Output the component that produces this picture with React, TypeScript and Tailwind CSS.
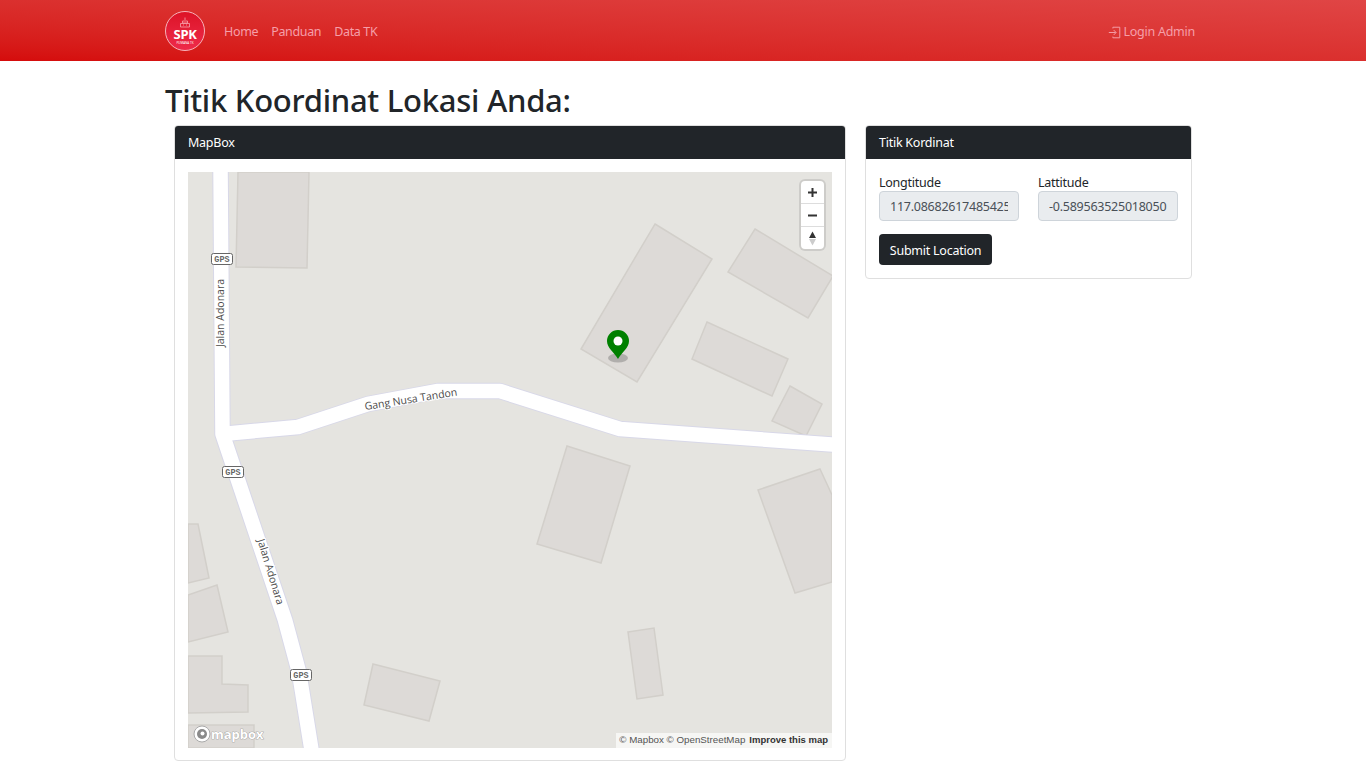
const font = "[font-family:'Noto_Sans','Open_Sans',sans-serif]";

const buildings = [
  '50,0 121,0 119,96 48,95',
  '467,52 524,87 449,210 393,177',
  '567,57 645,104 620,146 540,100',
  '519,150 600,187 584,224 504,187',
  '602,214 634,232 618,264 584,249',
  '379,274 442,294 413,391 349,372',
  '632,297 644,323 644,410 607,421 570,318',
  '440,460 466,456 475,523 449,527',
  '185,492 252,509 241,549 176,533',
  '0,352 10,352 21,406 0,411',
  '0,423 29,413 40,460 0,470',
  '0,484 34,484 34,512 60,513 60,540 0,541',
  '0,553 66,553 66,576 0,576',
];

const roads = [
  '32.5,-5 34.5,262 97,448 111,500 124,581',
  '34.5,262 110,255 180,232 250,219 312,219 432,257 650,273',
];

function Shield({ x, y }: { x: number; y: number }) {
  return (
    <g transform={`translate(${x} ${y})`}>
      <rect x="-10.5" y="-5.5" width="21" height="11" rx="2" fill="#fff" stroke="#666" strokeWidth="1" />
      <text x="0" y="3" textAnchor="middle" fontSize="8.5" fontWeight="700" fontFamily="'Liberation Mono',monospace" fill="#666">
        GPS
      </text>
    </g>
  );
}

function RoadLabel({ x, y, angle, children }: { x: number; y: number; angle: number; children: string }) {
  return (
    <text
      transform={`translate(${x} ${y}) rotate(${angle})`}
      textAnchor="middle"
      dominantBaseline="middle"
      fontSize="10.5"
      fontFamily="'Open Sans',sans-serif"
      fill="#4a4a4a"
      stroke="#fff"
      strokeWidth="2"
      paintOrder="stroke"
    >
      {children}
    </text>
  );
}

function MapPanel() {
  return (
    <div className="relative h-[576px] overflow-hidden bg-[#e5e4e0]">
      <svg viewBox="0 0 644 576" className="block h-[576px] w-[644px]">
        {buildings.map((points) => (
          <polygon key={points} points={points} fill="#dddad7" stroke="#d2cfca" strokeWidth="1.5" />
        ))}
        {roads.map((points) => (
          <polyline key={points} points={points} fill="none" stroke="#d8d8e8" strokeWidth="16.5" strokeLinejoin="round" />
        ))}
        {roads.map((points) => (
          <polyline key={points} points={points + ' '} fill="none" stroke="#fff" strokeWidth="14.5" strokeLinejoin="round" />
        ))}
        <RoadLabel x={223} y={228} angle={-9}>Gang Nusa Tandon</RoadLabel>
        <RoadLabel x={33} y={141} angle={-90}>Jalan Adonara</RoadLabel>
        <RoadLabel x={82} y={400} angle={73}>Jalan Adonara</RoadLabel>
        <Shield x={34} y={87} />
        <Shield x={45} y={300} />
        <Shield x={113} y={503} />
        {/* marker */}
        <ellipse cx="430" cy="186" rx="10" ry="4.5" fill="#000" opacity="0.2" />
        <path d="M430 187 C426 180 419 176 419 169 A11 11 0 0 1 441 169 C441 176 434 180 430 187 Z" fill="#008000" />
        <circle cx="430" cy="169" r="4.5" fill="#fff" />
      </svg>

      {/* zoom controls */}
      <div className="absolute right-2 top-[9px] flex w-[23px] flex-col rounded bg-white shadow-[0_0_0_2px_rgba(0,0,0,0.1)]">
        <div className="flex h-[23px] items-center justify-center border-b border-[#ddd]">
          <svg width="11" height="11" viewBox="0 0 11 11"><path d="M5.5 1v9M1 5.5h9" stroke="#333" strokeWidth="2" /></svg>
        </div>
        <div className="flex h-[23px] items-center justify-center border-b border-[#ddd]">
          <svg width="11" height="11" viewBox="0 0 11 11"><path d="M1 5.5h9" stroke="#333" strokeWidth="2" /></svg>
        </div>
        <div className="flex h-[22px] items-center justify-center">
          <svg width="9" height="15" viewBox="0 0 9 15">
            <path d="M4.5 0.5 8 7H1Z" fill="#333" />
            <path d="M4.5 14.5 8 8H1Z" fill="#ccc" />
          </svg>
        </div>
      </div>

      {/* mapbox logo */}
      <div className="absolute bottom-[5px] left-[5px] flex items-center">
        <svg width="18" height="18" viewBox="0 0 18 18">
          <circle cx="9" cy="9" r="8" fill="#fff" stroke="#aaa" strokeWidth="1" />
          <circle cx="9" cy="9" r="5" fill="#8a8a8a" />
          <circle cx="9.5" cy="8.5" r="2" fill="#fff" />
        </svg>
        <span className="text-[13px] font-bold leading-none text-white [-webkit-text-stroke:0.7px_#8a8a8a] [font-family:'Open_Sans',sans-serif] [paint-order:stroke]">
          mapbox
        </span>
      </div>

      {/* attribution */}
      <div className="absolute bottom-0 right-0 flex h-[15px] items-center gap-1 whitespace-nowrap bg-white/65 px-[3px] pr-1 text-[9.5px] text-[#333] [font-family:'Liberation_Sans',sans-serif]">
        <span className="text-[9.75px] text-[#555]">© Mapbox © OpenStreetMap</span>
        <span className="font-bold">Improve this map</span>
      </div>
    </div>
  );
}

function Field({ label, value }: { label: string; value: string }) {
  return (
    <div className="w-[140px]">
      <div className="pt-px text-[12.5px] leading-[18px] tracking-[-0.25px] text-[#212529]">{label}</div>
      <input
        readOnly
        value={value}
        className="mt-[-1px] block h-[30px] w-full rounded border border-[#ced4da] bg-[#e9ecef] px-[10px] text-[12.5px] tracking-[-0.25px] text-[#495057] outline-none"
      />
    </div>
  );
}

export default function App() {
  return (
    <div className={`min-h-[768px] bg-white ${font}`}>
      <nav className="h-[61px] bg-gradient-to-tr from-[#d50b0b] to-[#e04545]">
        <div className="mx-auto flex h-full w-[1036px] items-center">
          <div className="flex h-10 w-10 flex-col items-center justify-center rounded-full border border-[#f7b3bb] bg-gradient-to-b from-[#dd1226] to-[#ee2a4a] text-white">
            <svg width="12" height="11" viewBox="0 0 12 11" fill="none" stroke="#f6a5ad" strokeWidth="0.8">
              <path d="M6 0.5v2.5M3.5 4h5v2h-5zM1.5 6.5h9v3.5h-9zM4 8h1M7 8h1" />
            </svg>
            <span className="text-[13px] font-bold leading-[13px] tracking-[-0.3px]">SPK</span>
            <span className="text-[3px] leading-[4px]">PUMANA TK</span>
          </div>
          <div className="ml-[19px] mt-[3px] flex gap-[13px] text-[12.5px] tracking-[-0.35px] text-[#f59fa9]">
            <span>Home</span>
            <span>Panduan</span>
            <span>Data TK</span>
          </div>
          <div className="ml-auto mr-[6px] mt-[3px] flex items-center gap-[2px] text-[12.5px] tracking-[-0.25px] text-[#f59fa9]">
            <svg width="13" height="13" viewBox="0 0 16 16" fill="none" stroke="currentColor" strokeWidth="1.2">
              <path d="M6 3V1.5h8.5v13H6V13" />
              <path d="M1 8h8.5M7 5l3 3-3 3" />
            </svg>
            <span>Login Admin</span>
          </div>
        </div>
      </nav>

      <main className="mx-auto w-[1036px]">
        <h1 className="pb-px pt-4 text-[31px] font-medium leading-[47px] tracking-[-0.27px] text-[#212529]">Titik Koordinat Lokasi Anda:</h1>
        <div className="grid grid-cols-[672px_327px] items-start gap-x-[19px] px-[9px]">
          <section className="overflow-hidden rounded border border-[#dfdfdf]">
            <header className="flex h-[33px] items-center bg-[#212529] px-[13px] pt-px text-[12.5px] tracking-[-0.25px] text-white">MapBox</header>
            <div className="px-[13px] pb-3 pt-[13px]">
              <MapPanel />
            </div>
          </section>
          <section className="overflow-hidden rounded border border-[#dfdfdf]">
            <header className="flex h-[33px] items-center bg-[#212529] px-[13px] pt-px text-[12.5px] tracking-[-0.25px] text-white">Titik Kordinat</header>
            <div className="px-[13px] pb-[13px] pt-[14px]">
              <div className="flex gap-[19px]">
                <Field label="Longtitude" value="117.08682617485425" />
                <Field label="Lattitude" value="-0.589563525018050" />
              </div>
              <button className="mt-[13px] block h-[31px] w-[113px] rounded bg-[#212529] pt-[3px] text-[12.5px] tracking-[-0.25px] text-white">Submit Location</button>
            </div>
          </section>
        </div>
      </main>
    </div>
  );
}
